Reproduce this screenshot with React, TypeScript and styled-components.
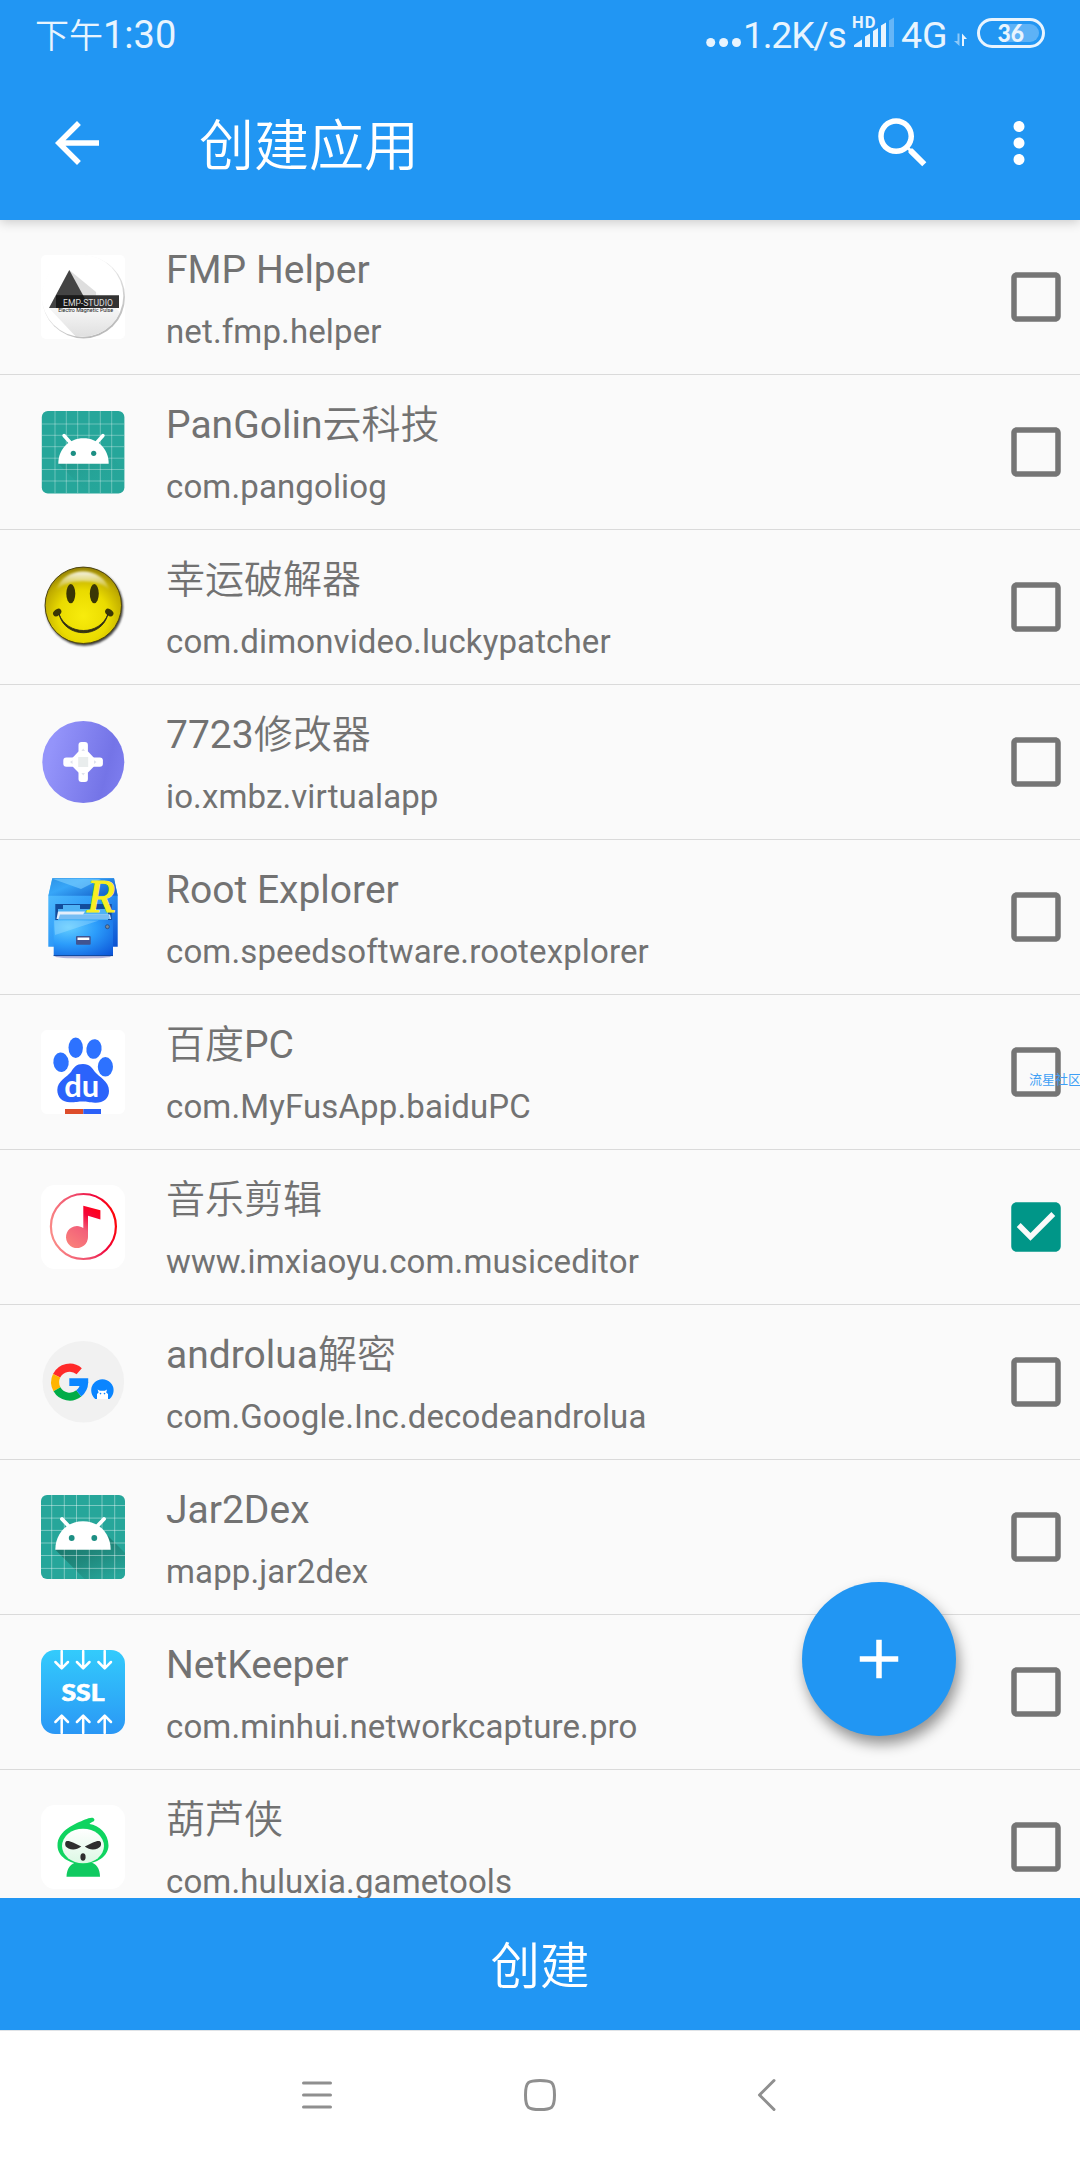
import styled, { createGlobalStyle } from "styled-components";
import { ReactNode } from "react";

const GlobalStyle = createGlobalStyle`
    * {
        box-sizing: border-box;
    }

    body {
        margin: 0;
        font-family: Roboto, "Noto Sans CJK SC", sans-serif;
    }
`

const Screen = styled.div`
    position: relative;
    display: flex;
    flex-direction: column;
    width: 1080px;
    height: 2160px;
    overflow: hidden;
    background: #fafafa;
`

const Header = styled.header`
    position: relative;
    z-index: 1;
    flex: none;
    height: 220px;
    background: #2196f3;
    color: #fff;
    box-shadow: 0 2px 11px rgba(0, 0, 0, .2);
`

const StatusBar = styled.div`
    display: flex;
    align-items: center;
    height: 66px;
    padding: 0 35px 0 35px;
    color: #e8f4fe;
`

const Clock = styled.span`
    flex: 1;
    padding-top: 4px;
    font-size: 38px;
    line-height: 40px;
`

const NetText = styled.span<{ $width: number; $gap: number; $tight?: boolean }>`
    flex: none;
    width: ${p => p.$width}px;
    margin-left: ${p => p.$gap}px;
    padding-top: 4px;
    font-size: 37.5px;
    line-height: 40px;
    letter-spacing: ${p => p.$tight ? "-1.3px" : "0"};
    white-space: nowrap;
`

const StatusIcon = styled.svg<{ $gap?: number }>`
    flex: none;
    margin-left: ${p => p.$gap ?? 0}px;
`

const Toolbar = styled.div`
    display: flex;
    align-items: center;
    height: 154px;
    padding: 0 28px 0 44px;
`

const ToolbarTitle = styled.h1`
    flex: 1;
    margin: 5px 0 0 89px;
    font-size: 55px;
    font-weight: 350;
    line-height: 66px;
`

const ActionIcon = styled.svg<{ $gap?: number }>`
    width: 66px;
    height: 66px;
    margin-left: ${p => p.$gap ?? 0}px;
    fill: currentColor;
`

const List = styled.main`
    flex: none;
    height: 1678px;
    overflow: hidden;
`

const Row = styled.div`
    display: flex;
    height: 155px;
    padding: 0 11px 0 41px;
    border-bottom: 1px solid #dadada;
`

const AppIcon = styled.svg`
    flex: none;
    width: 84px;
    height: 84px;
    margin: 35px 41px 0 0;
    overflow: visible;
`

const Labels = styled.div`
    flex: 1;
    padding-top: 28px;
    color: #727272;
    white-space: nowrap;
`

const AppName = styled.div`
    height: 45px;
    font-size: 39px;
    line-height: 45px;
`

const Package = styled.div`
    margin-top: 19px;
    font-size: 33px;
    line-height: 39px;
    letter-spacing: .13px;
`

const Checkbox = styled.svg<{ $checked: boolean }>`
    width: 66px;
    height: 66px;
    margin-top: 44px;
    fill: ${p => p.$checked ? "#009688" : "#757575"};
`

const Fab = styled.button`
    position: absolute;
    right: 124px;
    top: 1582px;
    z-index: 2;
    display: flex;
    align-items: center;
    justify-content: center;
    width: 154px;
    height: 154px;
    padding: 0;
    border: 0;
    border-radius: 50%;
    background: #2196f3;
    color: #fff;
    box-shadow: 3px 8px 14px rgba(0, 0, 0, .42);
`

const Watermark = styled.span`
    position: absolute;
    left: 1029px;
    top: 1071px;
    color: #3f9ff5;
    font-size: 13px;
    line-height: 18px;
    white-space: nowrap;
`

const CreateButton = styled.button`
    flex: none;
    height: 132px;
    padding: 0 0 3px;
    border: 0;
    background: #2196f3;
    color: #fff;
    font-family: inherit;
    font-size: 49.5px;
    font-weight: 350;
`

const NavBar = styled.nav`
    display: flex;
    flex: 1;
    align-items: center;
    justify-content: space-between;
    padding: 0 290px 1px;
    border-top: 1px solid #dfe3e7;
    background: #fff;
`

const NavIcon = styled.svg`
    width: 52px;
    height: 52px;
    fill: none;
    stroke: #8f8f8f;
    stroke-width: 3;
    stroke-linecap: round;
    stroke-linejoin: round;
`

const FmpIcon = () => (
    <>
        <defs>
            <linearGradient id="fmpDisc" x1="0" y1="0" x2="0" y2="1">
                <stop offset=".1" stopColor="#fff" />
                <stop offset=".6" stopColor="#f4f4f4" />
                <stop offset="1" stopColor="#dedede" />
            </linearGradient>
            <linearGradient id="fmpEdge" x1=".2" y1="0" x2=".75" y2="1">
                <stop offset=".1" stopColor="#fff" />
                <stop offset="1" stopColor="#b5b5b5" />
            </linearGradient>
            <clipPath id="fmpClip"><circle cx="42" cy="41" r="40.5" /></clipPath>
        </defs>
        <rect width="84" height="84" rx="5" fill="#fff" />
        <circle cx="42.5" cy="42" r="41.5" fill="url(#fmpEdge)" />
        <circle cx="41.5" cy="41" r="40.8" fill="#fff" />
        <path d="M28.3 15 84 61V84H37L8 53Z" fill="url(#fmpDisc)" clipPath="url(#fmpClip)" />
        <path d="M28.3 15 55 37V53H8Z" fill="#dedede" />
        <path d="M28.3 15 49 53H8Z" fill="#444" />
        <path d="M15 40.3H78V53H15Z" fill="#333" />
        <path d="M15 40.3H42L49 53H15Z" fill="#1a1a1a" />
        <text x="22" y="50.5" textLength="50" lengthAdjust="spacingAndGlyphs" fontSize="9.5" fill="#ddd">EMP-STUDIO</text>
        <text x="17.2" y="57" textLength="55" lengthAdjust="spacingAndGlyphs" fontSize="5.4" fill="#222">Electro Magnetic Pulse</text>
    </>
)

const AndroidIcon = () => (
    <>
        <defs>
            <linearGradient id="androidShadow" x1="0" y1="0" x2="1" y2="1">
                <stop offset="0" stopColor="#1d8478" stopOpacity=".55" />
                <stop offset=".8" stopColor="#26a69a" stopOpacity="0" />
            </linearGradient>
        </defs>
        <rect x=".8" y="1" width="82.6" height="82.6" rx="6" fill="#26a69a" />
        <path d="M17.5 53.7 47 83.5H77L83.4 74V60L67 43Z" fill="url(#androidShadow)" />
        <path d="M14 1V83M25.3 1V83M36.7 1V83M48 1V83M59.3 1V83M70.7 1V83M1 14H83M1 25.3H83M1 36.7H83M1 48.2H83M1 59.5H83M1 71H83" stroke="#fff" strokeOpacity=".32" />
        <path d="M17.3 53.7C17.3 39 28 28.3 42.5 28.3S67.7 39 67.7 53.7Z" fill="#fff" />
        <path d="M23 25.5 31 34.5M62 25.5 54 34.5" stroke="#fff" strokeWidth="3.4" strokeLinecap="round" />
        <circle cx="32.3" cy="43.3" r="2.6" fill="#1d8f84" />
        <circle cx="52.7" cy="43.3" r="2.6" fill="#1d8f84" />
    </>
)

const JarIcon = () => (
    <>
        <defs>
            <linearGradient id="jarShadow" x1=".1" y1=".1" x2=".8" y2="1">
                <stop offset="0" stopColor="#1a7469" />
                <stop offset=".5" stopColor="#20897d" />
                <stop offset="1" stopColor="#26a69a" />
            </linearGradient>
        </defs>
        <rect width="84" height="84" rx="6" fill="#26a69a" />
        <path d="M14.3 54.7 43.6 84H78Q84 84 84 78V58L67 41Z" fill="url(#jarShadow)" />
        <path d="M10.7 0V84M23.3 0V84M35.5 0V84M48.3 0V84M61 0V84M73.7 0V84M0 10.5H84M0 23.1H84M0 35.4H84M0 48H84M0 60.5H84M0 73.4H84" stroke="#fff" strokeOpacity=".4" />
        <path d="M14.3 54.7C14.3 38.5 26 26.2 42 26.2S69.7 38.5 69.7 54.7Z" fill="#fff" />
        <path d="M21 24 29 32.5M63 24 55 32.5" stroke="#fff" strokeWidth="3.8" strokeLinecap="round" />
        <circle cx="30.7" cy="43" r="2.9" fill="#1d8f84" />
        <circle cx="53.3" cy="43" r="2.9" fill="#1d8f84" />
    </>
)

const SmileIcon = () => (
    <>
        <defs>
            <radialGradient id="smileFace" cx=".5" cy=".64" r=".66">
                <stop offset="0" stopColor="#f8ec0c" />
                <stop offset=".5" stopColor="#eadb00" />
                <stop offset=".8" stopColor="#c0ac00" />
                <stop offset="1" stopColor="#8a7708" />
            </radialGradient>
            <linearGradient id="smileShine" x1="0" y1="0" x2="0" y2="1">
                <stop offset="0" stopColor="#fff" stopOpacity=".9" />
                <stop offset="1" stopColor="#fff" stopOpacity="0" />
            </linearGradient>
            <filter id="smileBlur" x="-20%" y="-20%" width="140%" height="140%">
                <feGaussianBlur stdDeviation="1.2" />
            </filter>
        </defs>
        <circle cx="43.4" cy="42" r="38.7" fill="#000" fillOpacity=".75" filter="url(#smileBlur)" />
        <circle cx="42.3" cy="40.3" r="38.2" fill="url(#smileFace)" stroke="#4e4510" />
        <path d="M15 26C22 0 62 0 69 26 60 13 24 13 15 26Z" fill="url(#smileShine)" filter="url(#smileBlur)" />
        <g fill="#3a3605">
            <ellipse cx="29.8" cy="28.7" rx="4.5" ry="9.6" />
            <ellipse cx="53.3" cy="28.7" rx="4.5" ry="9.6" />
            <ellipse cx="16.2" cy="47.5" rx="4.6" ry="3.2" transform="rotate(-38 16.2 47.5)" />
            <ellipse cx="68.3" cy="47.5" rx="4.6" ry="3.2" transform="rotate(38 68.3 47.5)" />
            <path d="M18 49C26 71 59 71 67 49 61 74 24 74 18 49Z" stroke="#222" strokeWidth=".8" />
        </g>
    </>
)

const PadIcon = () => (
    <>
        <defs>
            <linearGradient id="padDisc" x1="0" y1=".35" x2="1" y2=".6">
                <stop offset=".1" stopColor="#9494fa" />
                <stop offset=".8" stopColor="#7474e7" />
                <stop offset="1" stopColor="#7c7cee" />
            </linearGradient>
        </defs>
        <circle cx="42.3" cy="42" r="41" fill="url(#padDisc)" />
        <g fill="#fff">
            <rect x="37.5" y="22" width="9.4" height="40" rx="3" />
            <rect x="22.3" y="37.4" width="39.6" height="9.4" rx="3" />
            <path d="M37.5 31.5H47L52.7 37.4V46.8L47 52.6H37.5L31.8 46.8V37.4Z" />
        </g>
        <rect x="37.2" y="37" width="10" height="10" fill="#e9eded" />
        <path d="M42.2 28.5 44 31H40.4ZM42.2 55.5 44 53H40.4ZM29 42.1 31.5 40.3V43.9ZM55.5 42.1 53 40.3V43.9Z" fill="#dfe2ec" />
    </>
)

const RootIcon = () => (
    <>
        <defs>
            <linearGradient id="rootTop" x1="0" y1="0" x2="1" y2=".6">
                <stop offset="0" stopColor="#2e93e6" />
                <stop offset=".4" stopColor="#37a6f8" />
                <stop offset="1" stopColor="#1767cf" />
            </linearGradient>
            <linearGradient id="rootBody" x1="0" y1="0" x2="1" y2="1">
                <stop offset="0" stopColor="#58c4ff" />
                <stop offset=".5" stopColor="#2f9bf8" />
                <stop offset="1" stopColor="#0a50d0" />
            </linearGradient>
            <radialGradient id="rootFront" cx=".25" cy=".2" r="1.05">
                <stop offset="0" stopColor="#62cdff" />
                <stop offset=".45" stopColor="#2c9dfb" />
                <stop offset="1" stopColor="#0c55d8" />
            </radialGradient>
        </defs>
        <ellipse cx="42" cy="81.5" rx="28" ry="2" fill="#b4b4dc" />
        <path d="M11.3 3.3H73L76.7 20.7V71.7H7.3V20.7Z" fill="url(#rootBody)" />
        <path d="M11.3 3.3H73L76.7 20.7H7.5Z" fill="url(#rootTop)" />
        <path d="M12 4H60L40 14Z" fill="#7fd0ff" fillOpacity=".6" />
        <path d="M14.3 29H70.7V45H14.3Z" fill="#124c9c" />
        <path d="M17 34H22V30H39V34H67V45H17Z" fill="#4eb2f5" />
        <path d="M15.5 44 17 36.5H44L42 39.5H69L70 44Z" fill="#e4eefb" />
        <path d="M17.5 44 19 39.5H68L69 44Z" fill="#77bdf3" />
        <path d="M12.7 45H72V81H12.7Z" fill="url(#rootFront)" />
        <path d="M13 45.5H58L14 60Z" fill="#b0e6ff" fillOpacity=".35" />
        <path d="M12.7 80.6H72" stroke="#11479b" />
        <rect x="35" y="61" width="14.7" height="8.8" rx="1" fill="#41538f" />
        <path d="M36.5 62.5H48.3V65H36.5Z" fill="#fff" />
        <circle cx="66.4" cy="51.7" r="2" fill="#789" stroke="#234a80" strokeWidth=".8" />
        <text x="46" y="36.5" textLength="28" lengthAdjust="spacingAndGlyphs" fontFamily="Liberation Serif, serif" fontSize="46" fontStyle="italic" fill="#f8ee23" stroke="#f8ee23" strokeWidth="1.2">R</text>
    </>
)

const BaiduIcon = () => (
    <>
        <rect width="84" height="84" rx="6" fill="#fff" />
        <g fill="#2d72ff">
            <ellipse cx="20" cy="32.2" rx="7.7" ry="9.8" transform="rotate(-6 20 32.2)" />
            <ellipse cx="34.7" cy="17.8" rx="7.2" ry="10.3" />
            <ellipse cx="53" cy="19" rx="7.6" ry="9.9" transform="rotate(8 53 19)" />
            <ellipse cx="64.4" cy="36.8" rx="7.6" ry="9.7" />
        </g>
        <path d="M42 34C49 34 51 38 54 42 58 47 68 51 68 61 68 69 62 73 54 72.7 48 72.5 46 71.5 42 71.5 37 71.5 35 72.3 29 72.3 21 72.3 16.3 67 16.3 60 16.3 51 26 47 30 42 33 37.5 35 34 42 34Z" fill="#2b63fb" />
        <text x="23.3" y="66.8" textLength="35" lengthAdjust="spacingAndGlyphs" fontFamily="Lato, sans-serif" fontSize="30" fontWeight="700" fill="#fff">du</text>
        <path d="M24 79H42.3V84H24Z" fill="#dd4d2b" />
        <path d="M42.3 79H60V84H42.3Z" fill="#2b60f8" />
    </>
)

const MusicIcon = () => (
    <>
        <defs>
            <linearGradient id="musicRing" gradientUnits="userSpaceOnUse" x1="10" y1="50" x2="76" y2="34">
                <stop offset="0" stopColor="#fa8c88" />
                <stop offset=".5" stopColor="#ee4568" />
                <stop offset=".75" stopColor="#f0063c" />
                <stop offset="1" stopColor="#ff0505" />
            </linearGradient>
            <linearGradient id="musicNote" gradientUnits="userSpaceOnUse" x1="30" y1="60" x2="56" y2="24">
                <stop offset="0" stopColor="#f97e7a" />
                <stop offset=".45" stopColor="#f2607a" />
                <stop offset=".75" stopColor="#f4083c" />
                <stop offset="1" stopColor="#ff0018" />
            </linearGradient>
        </defs>
        <rect width="84" height="84" rx="14" fill="#fff" />
        <circle cx="42.4" cy="41.5" r="32.5" fill="none" stroke="url(#musicRing)" strokeWidth="2.2" />
        <path d="M42.3 20.7 59.4 25.2V34.4L47 30.8V52A11 11 0 1 1 42.3 43.1Z" fill="url(#musicNote)" />
    </>
)

const GoIcon = () => (
    <>
        <circle cx="42.3" cy="41.7" r="40.8" fill="#f1f1f1" />
        <g fill="none" strokeWidth="8">
            <path d="M38.2 31.2A14.6 14.6 0 0 0 15.6 35.8" stroke="#ff2a2a" />
            <path d="M15.6 35.8A14.6 14.6 0 0 0 16 49.3" stroke="#ffb400" />
            <path d="M16 49.3A14.6 14.6 0 0 0 37.8 53.4" stroke="#00ac47" />
            <path d="M37.8 53.4A14.6 14.6 0 0 0 43.2 42.5" stroke="#0a85ff" />
        </g>
        <path d="M28.3 38.3H47.2V42.5L44 46H28.3Z" fill="#0a85ff" />
        <path d="M54.2 59A11.2 11.2 0 1 1 68.6 59Z" fill="#0a85ff" />
        <path d="M56 59V54L57.6 52.5 56.6 49.5 59 50.8H63.8L66 49.5 65.2 52.5 67 54V59Z" fill="#fff" />
        <circle cx="59.5" cy="53.6" r=".8" fill="#0a85ff" />
        <circle cx="63.5" cy="53.6" r=".8" fill="#0a85ff" />
    </>
)

const SslIcon = () => (
    <>
        <defs>
            <linearGradient id="sslBg" x1="0" y1="0" x2="0" y2="1">
                <stop offset="0" stopColor="#33cbfc" />
                <stop offset="1" stopColor="#2a97f5" />
            </linearGradient>
        </defs>
        <rect width="84" height="84" rx="14" fill="url(#sslBg)" />
        <g fill="none" stroke="#fff" strokeWidth="2.5" strokeLinecap="round" strokeLinejoin="round">
            {[20.7, 42.2, 63.7].map(x => (
                <path
                    key={x}
                    d={`M${x} 1V18M${x - 6.3} 12 ${x} 18.3 ${x + 6.3} 12M${x} 83V66M${x - 6.3} 72 ${x} 65.7 ${x + 6.3} 72`}
                />
            ))}
        </g>
        <text x="20.5" y="50.5" textLength="43" lengthAdjust="spacingAndGlyphs" fontFamily="Lato, sans-serif" fontSize="23.5" fontWeight="900" fill="#fff" stroke="#fff" strokeWidth=".6">SSL</text>
    </>
)

const GourdIcon = () => (
    <>
        <defs>
            <linearGradient id="gourdFace" x1="0" y1="0" x2="0" y2="1">
                <stop offset="0" stopColor="#fff" />
                <stop offset="1" stopColor="#dcf8e4" />
            </linearGradient>
        </defs>
        <rect width="84" height="84" rx="14" fill="#fff" />
        <path d="M25.5 71.7C25.5 64 30 57.5 36 57.5H49C55 57.5 59 64 59 71.7Z" fill="#10ca60" />
        <path d="M53.4 14.5C53 11.5 48 12.6 44 14.5 35 18.5 16.5 25 16.5 40.5 16.5 51.5 28 59 42 59S67.5 51 67.5 40.5C67.5 28.5 58 20.5 48.5 19 50 17 53.7 16.8 53.4 14.5Z" fill="#0fd460" />
        <ellipse cx="42" cy="41" rx="21" ry="17.2" fill="url(#gourdFace)" />
        <path d="M24.2 38C24.5 35 28 35.5 32 37.5L40.3 41.5C36 45 31 45 27.5 43.5 24.5 42 24 40.5 24.2 38ZM60 38C59.7 35 56 35.5 52 37.5L43.8 41.5C48 45 53 45 56.7 43.5 59.7 42 60.2 40.5 60 38Z" fill="#2e2e2e" />
        <ellipse cx="42" cy="52" rx="2.6" ry="3.7" fill="#2e2e2e" />
    </>
)

type App = {
    name: string
    pkg: string
    icon: ReactNode
    checked?: boolean
}

const apps: App[] = [
    { name: "FMP Helper", pkg: "net.fmp.helper", icon: <FmpIcon /> },
    { name: "PanGolin云科技", pkg: "com.pangoliog", icon: <AndroidIcon /> },
    { name: "幸运破解器", pkg: "com.dimonvideo.luckypatcher", icon: <SmileIcon /> },
    { name: "7723修改器", pkg: "io.xmbz.virtualapp", icon: <PadIcon /> },
    { name: "Root Explorer", pkg: "com.speedsoftware.rootexplorer", icon: <RootIcon /> },
    { name: "百度PC", pkg: "com.MyFusApp.baiduPC", icon: <BaiduIcon /> },
    { name: "音乐剪辑", pkg: "www.imxiaoyu.com.musiceditor", icon: <MusicIcon />, checked: true },
    { name: "androlua解密", pkg: "com.Google.Inc.decodeandrolua", icon: <GoIcon /> },
    { name: "Jar2Dex", pkg: "mapp.jar2dex", icon: <JarIcon /> },
    { name: "NetKeeper", pkg: "com.minhui.networkcapture.pro", icon: <SslIcon /> },
    { name: "葫芦侠", pkg: "com.huluxia.gametools", icon: <GourdIcon /> },
]

// Han glyphs use a lighter cut, latin stays regular
const Han = styled.span<{ $size?: number }>`
    font-size: ${p => p.$size ? p.$size + "px" : "inherit"};
    font-weight: 350;
`

const renderName = (name: string) => (
    name.split(/([\u4e00-\u9fff]+)/).map((part, index) => (
        index % 2 ? <Han key={index}>{part}</Han> : part
    ))
)

const unchecked = "M19 5v14H5V5h14m0-2H5c-1.1 0-2 .9-2 2v14c0 1.1.9 2 2 2h14c1.1 0 2-.9 2-2V5c0-1.1-.9-2-2-2z"
const checkedPath = "M19 3H5c-1.11 0-2 .9-2 2v14c0 1.1.89 2 2 2h14c1.11 0 2-.9 2-2V5c0-1.1-.89-2-2-2zm-9 14l-5-5 1.41-1.41L10 14.17l7.59-7.59L19 8l-9 9z"

const Status = () => (
    <StatusBar>
        <Clock><Han $size={34}>下午</Han>1:30</Clock>
        <StatusIcon width="36" height="66" fill="currentColor">
            <circle cx="4.7" cy="42.5" r="4.5" />
            <circle cx="17.6" cy="42.5" r="4.5" />
            <circle cx="30.5" cy="42.5" r="4.5" />
        </StatusIcon>
        <NetText $width={109} $gap={1} $tight>1.2K/s</NetText>
        <StatusIcon width="44" height="66" fill="currentColor">
            <text x="0" y="28.3" fontSize="16.5" fontWeight="700" textLength="23.5">HD</text>
            <path d="M2 47V45L10 39.5V47ZM13 47V36.5L18 33.5V47ZM21 47V31L26 28V47ZM29 47V25.5L34 22.5V47Z" />
            <path d="M37 47V20.5L42 17.5V47Z" fillOpacity=".35" />
        </StatusIcon>
        <NetText $width={48} $gap={5}>4G</NetText>
        <StatusIcon width="16" height="66" $gap={5}>
            <path d="M5.5 33.5V46L0 41H3.5V33.5Z" fill="currentColor" fillOpacity=".55" />
            <path d="M8 46V33.5L13 39H10V46Z" fill="currentColor" />
        </StatusIcon>
        <StatusIcon width="68" height="66" $gap={7}>
            <rect x="1.5" y="19.5" width="65" height="27" rx="13.5" fill="none" stroke="currentColor" strokeWidth="3" />
            <path d="M30 24H53A9 9 0 0 1 53 42H30Z" fill="#fff" fillOpacity=".27" />
            <text x="20.5" y="41.7" textLength="26.5" lengthAdjust="spacingAndGlyphs" fontFamily="Lato, sans-serif" fontSize="24" fontWeight="900" fill="currentColor">36</text>
        </StatusIcon>
    </StatusBar>
)

const App = () => (
    <Screen>
        <GlobalStyle />
        <Header>
            <Status />
            <Toolbar>
                <ActionIcon viewBox="0 0 24 24">
                    <path d="M20 11H7.83l5.59-5.59L12 4l-8 8 8 8 1.41-1.41L7.83 13H20v-2z" />
                </ActionIcon>
                <ToolbarTitle>创建应用</ToolbarTitle>
                <ActionIcon viewBox="0 0 24 24">
                    <path d="M15.5 14h-.79l-.28-.27C15.41 12.59 16 11.11 16 9.5 16 5.91 13.09 3 9.5 3S3 5.91 3 9.5 5.91 16 9.5 16c1.61 0 3.09-.59 4.23-1.57l.27.28v.79l5 4.99L20.49 19l-4.99-5zm-6 0C7.01 14 5 11.99 5 9.5S7.01 5 9.5 5 14 7.01 14 9.5 11.99 14 9.5 14z" />
                </ActionIcon>
                <ActionIcon viewBox="0 0 24 24" $gap={50}>
                    <path d="M12 8c1.1 0 2-.9 2-2s-.9-2-2-2-2 .9-2 2 .9 2 2 2zm0 2c-1.1 0-2 .9-2 2s.9 2 2 2 2-.9 2-2-.9-2-2-2zm0 6c-1.1 0-2 .9-2 2s.9 2 2 2 2-.9 2-2-.9-2-2-2z" />
                </ActionIcon>
            </Toolbar>
        </Header>
        <List>
            {apps.map(app => (
                <Row key={app.pkg}>
                    <AppIcon viewBox="0 0 84 84">{app.icon}</AppIcon>
                    <Labels>
                        <AppName>{renderName(app.name)}</AppName>
                        <Package>{app.pkg}</Package>
                    </Labels>
                    <Checkbox viewBox="0 0 24 24" $checked={!!app.checked}>
                        <path d={app.checked ? checkedPath : unchecked} />
                    </Checkbox>
                </Row>
            ))}
        </List>
        <Fab>
            <svg width="66" height="66" viewBox="0 0 24 24" fill="currentColor">
                <path d="M19 13h-6v6h-2v-6H5v-2h6V5h2v6h6v2z" />
            </svg>
        </Fab>
        <Watermark>流星社区</Watermark>
        <CreateButton>创建</CreateButton>
        <NavBar>
            <NavIcon viewBox="0 0 52 52">
                <path d="M13.5 14H40.5M13.5 26H40.5M13.5 38H40.5" />
            </NavIcon>
            <NavIcon viewBox="0 0 52 52">
                <path d="M26 11.5C37.5 11.5 40.5 12.5 40.5 26S37.5 40.5 26 40.5 11.5 39.5 11.5 26 14.5 11.5 26 11.5Z" />
            </NavIcon>
            <NavIcon viewBox="0 0 52 52">
                <path d="M36 11.5 21.5 26 36 40.5" />
            </NavIcon>
        </NavBar>
    </Screen>
)

export default App
